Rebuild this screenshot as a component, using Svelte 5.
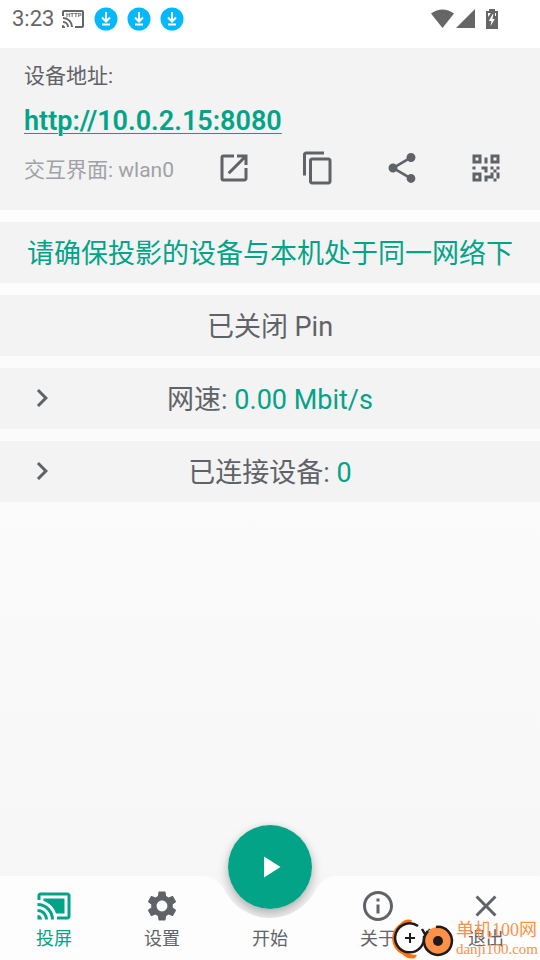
<script lang="ts">
  type IconName = keyof typeof icons;

  interface NavItem {
    id: string;
    label: string;
    icon: IconName | null;
  }

  const icons = {
    open: 'M19 19H5V5h7V3H5a2 2 0 0 0-2 2v14a2 2 0 0 0 2 2h14c1.1 0 2-.9 2-2v-7h-2v7zM14 3v2h3.59l-9.83 9.83 1.41 1.41L19 6.41V10h2V3h-7z',
    copy: 'M16 1H4c-1.1 0-2 .9-2 2v14h2V3h12V1zm3 4H8c-1.1 0-2 .9-2 2v14c0 1.1.9 2 2 2h11c1.1 0 2-.9 2-2V7c0-1.1-.9-2-2-2zm0 16H8V7h11v14z',
    share: 'M18 16.08c-.76 0-1.44.3-1.96.77L8.91 12.7c.05-.23.09-.46.09-.7s-.04-.47-.09-.7l7.05-4.11c.54.5 1.25.81 2.04.81 1.66 0 3-1.34 3-3s-1.34-3-3-3-3 1.34-3 3c0 .24.04.47.09.7L8.04 9.81C7.5 9.31 6.79 9 6 9c-1.66 0-3 1.34-3 3s1.34 3 3 3c.79 0 1.5-.31 2.04-.81l7.12 4.16c-.05.21-.08.43-.08.65 0 1.61 1.31 2.92 2.92 2.92s2.92-1.31 2.92-2.92-1.31-2.92-2.92-2.92z',
    qr: 'M3 11h2v2H3v-2M11 5h2v4h-2V5M9 11h4v4h-2v-2H9v-2M15 11h2v2h2v-2h2v2h-2v2h2v4h-2v2h-2v-2h-4v2h-2v-4h4v-2h2v-2h-2v-2M19 19v-4h-2v4h2M15 3h6v6h-6V3M17 5v2h2V5h-2M3 3h6v6H3V3M5 5v2h2V5H5M3 15h6v6H3v-6M5 17v2h2v-2H5z',
    chevron: 'M10 6L8.59 7.41 13.17 12l-4.58 4.59L10 18l6-6z',
    cast: 'M1 18v3h3c0-1.66-1.34-3-3-3zm0-4v2c2.76 0 5 2.24 5 5h2c0-3.87-3.13-7-7-7zm18-7H5v1.63c3.96 1.28 7.09 4.41 8.37 8.37H19V7zM1 10v2c4.97 0 9 4.03 9 9h2c0-6.08-4.93-11-11-11zm20-7H3c-1.1 0-2 .9-2 2v3h2V5h18v14h-7v2h7c1.1 0 2-.9 2-2V5c0-1.1-.9-2-2-2z',
    settings: 'M19.14 12.94c.04-.3.06-.61.06-.94 0-.32-.02-.64-.07-.94l2.03-1.58c.18-.14.23-.41.12-.61l-1.92-3.32c-.12-.22-.37-.29-.59-.22l-2.39.96c-.5-.38-1.03-.7-1.62-.94l-.36-2.54c-.04-.24-.24-.41-.48-.41h-3.84c-.24 0-.43.17-.47.41l-.36 2.54c-.59.24-1.13.57-1.62.94l-2.39-.96c-.22-.08-.47 0-.59.22L2.74 8.87c-.12.21-.08.47.12.61l2.03 1.58c-.05.3-.09.63-.09.94s.02.64.07.94l-2.03 1.58c-.18.14-.23.41-.12.61l1.92 3.32c.12.22.37.29.59.22l2.39-.96c.5.38 1.03.7 1.62.94l.36 2.54c.05.24.24.41.48.41h3.84c.24 0 .44-.17.47-.41l.36-2.54c.59-.24 1.13-.56 1.62-.94l2.39.96c.22.08.47 0 .59-.22l1.92-3.32c.12-.22.07-.47-.12-.61l-2.01-1.58zM12 15.6c-1.98 0-3.6-1.62-3.6-3.6s1.62-3.6 3.6-3.6 3.6 1.62 3.6 3.6-1.62 3.6-3.6 3.6z',
    info: 'M11 7h2v2h-2zm0 4h2v6h-2zm1-9C6.48 2 2 6.48 2 12s4.48 10 10 10 10-4.48 10-10S17.52 2 12 2zm0 18c-4.41 0-8-3.59-8-8s3.59-8 8-8 8 3.59 8 8-3.59 8-8 8z',
    close: 'M19 6.41L17.59 5 12 10.59 6.41 5 5 6.41 10.59 12 5 17.59 6.41 19 12 13.41 17.59 19 19 17.59 13.41 12z',
    play: 'M8 5v14l11-7z',
  };

  const actions: { icon: IconName; label: string }[] = [
    { icon: 'open', label: '打开' },
    { icon: 'copy', label: '复制' },
    { icon: 'share', label: '分享' },
    { icon: 'qr', label: '二维码' },
  ];

  const navItems: NavItem[] = [
    { id: 'cast', label: '投屏', icon: 'cast' },
    { id: 'settings', label: '设置', icon: 'settings' },
    { id: 'start', label: '开始', icon: null },
    { id: 'about', label: '关于', icon: 'info' },
    { id: 'exit', label: '退出', icon: 'close' },
  ];

  const address = 'http://10.0.2.15:8080';
  let active = $state('cast');
  let speed = $state('0.00');
  let clients = $state(0);
</script>

{#snippet icon(name: IconName)}
  <svg class="icon" viewBox="0 0 24 24" aria-hidden="true"><path fill-rule="evenodd" d={icons[name]} /></svg>
{/snippet}

<div class="page">
  <!-- System status bar -->
  <header class="status-bar">
    <span class="time">3:23</span>
    <svg class="http" viewBox="0 0 22 18" aria-hidden="true">
      <path d="M1 6V2q0-1 1-1h18q1 0 1 1v14q0 1-1 1h-7M1 8a9 9 0 0 1 9 9M1 12a5 5 0 0 1 5 5" fill="none" stroke="#666" stroke-width="2" />
      <path d="M0 15a3 3 0 0 1 3 3H0z" fill="#666" />
      <text x="4" y="7">HTTP</text>
    </svg>
    <div class="downloads">
      {#each [1, 2, 3] as n (n)}
        <svg class="download" viewBox="0 0 24 24" aria-hidden="true">
          <circle cx="12" cy="12" r="11.500" fill="#03b9fb" />
          <path d="M12 5v9M8 10.500l4 4 4-4M8 17.500h8" fill="none" stroke="#fff" stroke-width="2" />
        </svg>
      {/each}
    </div>
    <svg class="system" viewBox="0 0 68 20" aria-hidden="true">
      <path d="M0 4.500Q11.500-3.500 23 4.500L11.500 19z" />
      <path d="M44 0v19H25z" />
      <path d="M58 0h6v2h3v18H55V2h3zM57 4v4l3-4zM61.800 5l-4 7h2.600l-.8 5 4.200-7h-2.400l1-5zM64 4v3h1V4z" fill-rule="evenodd" />
    </svg>
  </header>

  <main>
    <section class="card">
      <p class="label">设备地址:</p>
      <a class="address" href={address}>{address}</a>
      <div class="card-row">
        <span class="iface">交互界面: wlan0</span>
        <div class="actions">
          {#each actions as action (action.icon)}
            <button aria-label={action.label}>{@render icon(action.icon)}</button>
          {/each}
        </div>
      </div>
    </section>

    <p class="row accent">请确保投影的设备与本机处于同一网络下</p>
    <p class="row">已关闭 Pin</p>
    <button class="row">
      <span class="chevron">{@render icon('chevron')}</span>
      <span>网速: <span class="accent">{speed} Mbit/s</span></span>
    </button>
    <button class="row">
      <span class="chevron">{@render icon('chevron')}</span>
      <span>已连接设备: <span class="accent">{clients}</span></span>
    </button>
  </main>

  <nav>
    <!-- Bar background with the cradle for the start button -->
    <div class="bar-bg">
      <span class="side"></span>
      <svg class="cradle" viewBox="0 0 136 84" aria-hidden="true">
        <path d="M0 0h.7A24 24 0 0 1 22.200 13.400A51 51 0 0 0 113.800 13.400A24 24 0 0 1 135.300 0H136V84H0z" />
      </svg>
      <span class="side"></span>
    </div>
    <span class="fab-shadow"></span>
    {#each navItems as item (item.id)}
      <button class="nav-item" class:active={active === item.id} onclick={() => (active = item.id)}>
        <span class="nav-icon">{#if item.icon}{@render icon(item.icon)}{/if}</span>
        <span>{item.label}</span>
      </button>
    {/each}
    <button class="fab" aria-label="开始投屏">{@render icon('play')}</button>

    <div class="mark">
      <svg viewBox="0 0 64 40" aria-hidden="true">
        <path d="M20 1Q13-1 9 4Q0 10 0 20Q1 31 10 35Q16 41 23 39L25 36Q13 35 8 28Q1 18 7 9Q12 4 19 4z" fill="#fb7411" />
        <circle cx="18" cy="19" r="14" fill="#fff" />
        <path d="M26 7A14.500 14.500 0 1 0 32 17M30 10l4 7M38 10l-3 7" fill="none" stroke="#211a1c" stroke-width="2.500" />
        <circle cx="46" cy="22" r="14" fill="#fe9148" />
        <path d="M44 8A14 14 0 1 1 36 12" fill="none" stroke="#211a1c" stroke-width="2.500" />
        <circle cx="46" cy="22" r="5" fill="#211a1c" />
        <path d="M13 19h10M18 14v10" stroke="#211a1c" stroke-width="2" />
      </svg>
      <div class="mark-text">
        <span class="mark-name">单机100网</span>
        <span class="mark-site">danji100.com</span>
      </div>
    </div>
  </nav>
</div>

<style>
  :global(body) { margin: 0; }

  .page {
    --accent: #03a388;
    --text: #5f6368;
    --bar: #fdfdfd;
    display: flex;
    flex-direction: column;
    min-height: 100vh;
    background: linear-gradient(#ffffff, #f6f6f6);
    color: var(--text);
    font-family: Roboto, 'Noto Sans CJK SC', sans-serif;
  }

  button {
    padding: 0;
    border: 0;
    background: none;
    color: inherit;
    font: inherit;
    cursor: pointer;
  }
  p { margin: 0; }
  .icon { display: block; width: 36px; height: 36px; fill: currentColor; }
  .accent { color: var(--accent); }

  .status-bar {
    display: flex;
    align-items: center;
    box-sizing: border-box;
    height: 48px;
    padding: 0 41px 11px 12px;
    background: #fff;
    color: #666;
  }
  .time { font-size: 22px; line-height: 24px; }
  .http { width: 22px; height: 18px; margin-left: 8px; }
  .http text { font: bold 6px Roboto, sans-serif; fill: #666; }
  .downloads { display: flex; gap: 9px; margin-left: 10px; }
  .download { width: 24px; height: 24px; }
  .system { width: 68px; height: 20px; margin-left: auto; fill: #666; }

  main {
    display: flex;
    flex: 1;
    flex-direction: column;
    gap: 12px;
  }

  .card { padding: 12px 36px 24px 24px; background: #f3f3f3; }
  .label { font-size: 21px; line-height: 32px; }
  .address {
    display: block;
    width: fit-content;
    margin: 9px 0;
    color: var(--accent);
    font-size: 27px;
    font-weight: 600;
    line-height: 40px;
    text-decoration-thickness: 1px;
    text-underline-offset: 3px;
  }
  .card-row { display: flex; align-items: center; justify-content: space-between; }
  .iface { padding-top: 4px; color: #9fa2a6; font-size: 21px; line-height: 32px; }
  .actions { display: flex; gap: 48px; }

  .row {
    display: flex;
    position: relative;
    align-items: center;
    justify-content: center;
    box-sizing: border-box;
    min-height: 61px;
    padding-top: 2px;
    background: #f3f3f3;
    font-size: 27px;
    line-height: 40px;
  }
  .chevron { position: absolute; top: 12px; left: 24px; }

  nav { display: flex; position: relative; height: 84px; }
  .bar-bg { display: flex; position: absolute; inset: 0; z-index: 1; }
  .side { flex: 1; background: var(--bar); }
  .cradle { width: 136px; height: 84px; fill: var(--bar); }

  .nav-item {
    display: flex;
    position: relative;
    z-index: 2;
    flex: 1;
    flex-direction: column;
    align-items: center;
    padding-top: 12px;
    font-size: 18px;
    line-height: 30px;
  }
  .nav-item.active { color: var(--accent); }
  .nav-icon { height: 36px; }

  .fab, .fab-shadow {
    position: absolute;
    top: -51px;
    left: calc(50% - 42px);
    width: 84px;
    height: 84px;
    border-radius: 50%;
  }
  /* the shadow stays behind the bar, so it only shows inside the cradle */
  .fab-shadow { box-shadow: 0 6px 12px rgba(0, 0, 0, 0.25), 0 0 6px rgba(0, 0, 0, 0.08); }
  .fab {
    display: grid;
    z-index: 2;
    place-items: center;
    background: var(--accent);
    color: #fff;
  }

  .mark {
    display: flex;
    position: absolute;
    z-index: 3;
    right: 2px;
    bottom: 1px;
    align-items: center;
    pointer-events: none;
  }
  .mark svg { width: 64px; height: 40px; }
  .mark-text {
    display: flex;
    flex-direction: column;
    color: #fe9148;
    font-family: 'Liberation Serif', 'Noto Sans CJK SC', serif;
    white-space: nowrap;
  }
  .mark-name { font-size: 18px; line-height: 20px; }
  .mark-site { font-size: 15px; line-height: 18px; }
</style>
